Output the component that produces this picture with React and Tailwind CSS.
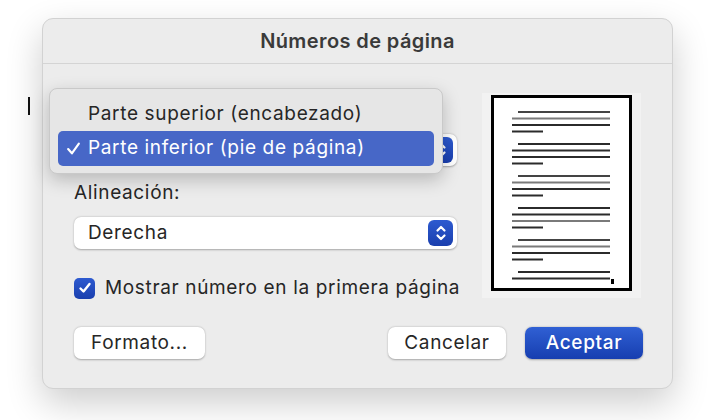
import React from "react";

const font = { fontFamily: "Inter, 'Noto Sans', 'Liberation Sans', sans-serif" };

function Stepper() {
  return (
    <div className="w-[25px] h-[26px] rounded-[6px] bg-gradient-to-b from-[#2d5ad0] to-[#1a3fae] flex items-center justify-center">
      <svg width="12" height="18" viewBox="0 0 12 18" fill="none" stroke="white" strokeWidth="2.2" strokeLinecap="round" strokeLinejoin="round">
        <path d="M2.5 6.5 L6 3 L9.5 6.5" />
        <path d="M2.5 11.5 L6 15 L9.5 11.5" />
      </svg>
    </div>
  );
}

function Select({ value }) {
  return (
    <div className="h-[32px] w-[383px] bg-white rounded-[7px] shadow-[0_0.5px_2px_rgba(0,0,0,0.3)] flex items-center justify-between pl-[14px] pr-[4px]">
      <span className="text-[19px] tracking-[0.65px] text-[#262626]">{value}</span>
      <Stepper />
    </div>
  );
}

function PagePreview() {
  const groups = [0, 1, 2, 3, 4];
  const dark = "#2b2b2b";
  const mid = "#7a7a7a";
  return (
    <svg width="141" height="196" viewBox="0 0 141 196">
      <rect x="1.5" y="1.5" width="138" height="193" fill="white" stroke="black" strokeWidth="3" />
      {groups.map((g) => {
        const y = 17 + g * 32;
        return (
          <g key={g} strokeWidth="2">
            <line x1="27" y1={y} x2="119" y2={y} stroke={g % 2 ? dark : "#444"} />
            <line x1="21" y1={y + 6.5} x2="119" y2={y + 6.5} stroke={g % 2 ? dark : mid} />
            <line x1="21" y1={y + 13} x2="119" y2={y + 13} stroke={g === 3 ? mid : dark} />
            <line x1="21" y1={y + 19.5} x2="52" y2={y + 19.5} stroke={dark} />
          </g>
        );
      })}
      <g strokeWidth="2">
        <line x1="27" y1="177" x2="119" y2="177" stroke={dark} />
        <line x1="21" y1="183.5" x2="119" y2="183.5" stroke={dark} />
      </g>
      <rect x="120" y="184" width="3" height="5" fill="black" />
    </svg>
  );
}

export default function App() {
  return (
    <div className="w-[720px] h-[420px] bg-white relative overflow-hidden" style={font}>
      {/* text cursor outside dialog */}
      <div className="absolute left-[28px] top-[97px] w-[1.5px] h-[18px] bg-[#111]" />
      <div className="pt-[18px] pl-[42px]">
        <div className="w-[631px] h-[371px] rounded-[11px] bg-[#ececec] border border-[#d2d2d2] shadow-[0_14px_36px_rgba(0,0,0,0.2)] flex flex-col relative">
          <div className="h-[45px] border-b border-[#d4d4d4] flex items-center justify-center">
            <span className="text-[20px] font-semibold text-[#3a3a3a] tracking-[0.4px]">Números de página</span>
          </div>
          <div className="flex pl-[31px]">
            <div className="flex flex-col w-[383px] shrink-0">
              <div className="mt-[35px] h-[22px]" />
              <div className="mt-[13px]">
                <Select value="Parte inferior (pie de página)" />
              </div>
              <div className="mt-[16px] h-[22px] text-[19px] tracking-[0.65px] leading-[22px] text-[#262626]">Alineación:</div>
              <div className="mt-[13px]">
                <Select value="Derecha" />
              </div>
              <div className="mt-[28px] flex items-center h-[22px]">
                <div className="shrink-0 w-[21px] h-[21px] rounded-[5px] bg-gradient-to-b from-[#2d5ad0] to-[#1a3fae] flex items-center justify-center">
                  <svg width="14" height="14" viewBox="0 0 14 14" fill="none" stroke="white" strokeWidth="2.4" strokeLinecap="round" strokeLinejoin="round">
                    <path d="M2.5 7.5 L5.5 10.5 L11.5 3" />
                  </svg>
                </div>
                <span className="shrink-0 ml-[10px] text-[19px] tracking-[0.65px] text-[#262626] whitespace-nowrap">Mostrar número en la primera página</span>
              </div>
            </div>
            <div className="shrink-0 ml-[25px] mt-[29px] w-[159px] h-[205px] bg-[#f2f2f2] flex justify-center pt-[2px]">
              <PagePreview />
            </div>
          </div>
          <div className="mt-[28px] flex items-center pl-[31px] pr-[29px]">
            <div className="w-[131px] h-[32px] bg-white rounded-[7px] shadow-[0_0.5px_2px_rgba(0,0,0,0.3)] flex items-center justify-center text-[19px] tracking-[0.65px] text-[#262626]">Formato...</div>
            <div className="flex-1" />
            <div className="w-[118px] h-[32px] bg-white rounded-[7px] shadow-[0_0.5px_2px_rgba(0,0,0,0.3)] flex items-center justify-center text-[19px] tracking-[0.65px] text-[#262626]">Cancelar</div>
            <div className="ml-[19px] w-[118px] h-[32px] rounded-[7px] bg-gradient-to-b from-[#3060d4] to-[#173eb0] shadow-[0_0.5px_2px_rgba(0,0,0,0.3)] flex items-center justify-center text-[19px] tracking-[0.65px] font-medium text-white">Aceptar</div>
          </div>

          {/* open popup menu */}
          <div className="absolute left-[6px] top-[69px] w-[394px] h-[86px] rounded-[8px] bg-[#e6e6e6] border border-[#c9c9c9] shadow-[0_6px_18px_rgba(0,0,0,0.22)] flex flex-col px-[8px] pt-[8px]">
            <div className="h-[34px] flex items-center pl-[30px] text-[19px] tracking-[0.65px] text-[#262626]">Parte superior (encabezado)</div>
            <div className="h-[35px] rounded-[5px] bg-[#4767c7] flex items-center text-[19px] tracking-[0.65px] text-white">
              <span className="w-[30px] flex justify-center">
                <svg width="15" height="15" viewBox="0 0 14 14" fill="none" stroke="white" strokeWidth="2" strokeLinecap="round" strokeLinejoin="round">
                  <path d="M2 7.5 L5.5 11.5 L12 2.5" />
                </svg>
              </span>
              <span>Parte inferior (pie de página)</span>
            </div>
          </div>
        </div>
      </div>
    </div>
  );
}
